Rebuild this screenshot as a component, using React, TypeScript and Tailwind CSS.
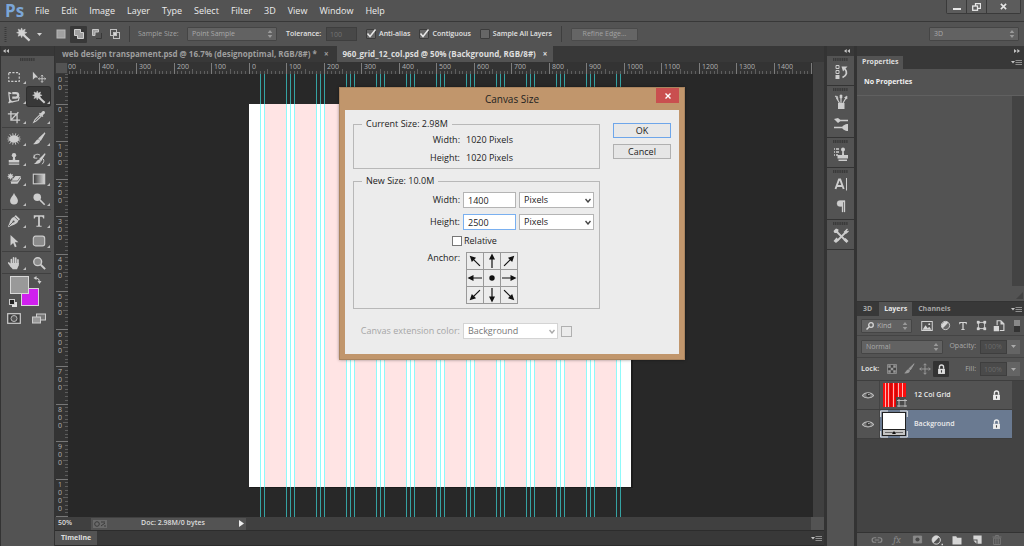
import React from "react";

type Kids = { children?: React.ReactNode };

const MENUS = ["File", "Edit", "Image", "Layer", "Type", "Select", "Filter", "3D", "View", "Window", "Help"];

/* ---------- icons ---------- */

function Ico({ children, className = "size-4" }: Kids & { className?: string }) {
  return (
    <svg viewBox="0 0 16 16" className={className} fill="none" stroke="currentColor" strokeWidth="1.3" aria-hidden="true">
      {children}
    </svg>
  );
}

const Marquee = () => <Ico><rect x="2" y="3" width="12" height="10" strokeDasharray="2.5 1.6" /></Ico>;
const Move = () => (
  <Ico>
    <path d="M1 2v9l2.600-2.400H7z" fill="currentColor" stroke="none" />
    <path d="M11.500 6v8M7.500 10h8M10.300 7.200l1.200-1.400 1.200 1.400M10.300 12.800l1.200 1.400 1.200-1.400M8.700 8.800 7.300 10l1.400 1.200M14.300 8.800l1.400 1.200-1.400 1.200" strokeWidth="1" />
  </Ico>
);
const MagLasso = () => (
  <Ico>
    <path d="M1.500 2.500l3.500 1.500M2 3l1 9 3 1.500 7-1.500 1-4M2 15l2-4" strokeWidth="1.300" />
    <path d="M6 3.500h4.200a2.600 2.600 0 0 1 0 5.200H6" strokeWidth="2.600" />
    <path d="M1.500 15l2.500-4 2.500 3z" fill="currentColor" stroke="none" />
  </Ico>
);
const Wand = () => (
  <Ico>
    <path d="M7.500 8 14.500 14.500" strokeWidth="2.400" />
    <path d="M6 1l1 2.600L9.800 2.300 8.900 5l2.600 1-2.600 1.100.9 2.700L7 8.700 6 11.300 5 8.700 2.300 9.800 3.300 7 .700 6l2.600-1L2.300 2.300 5 3.500z" fill="currentColor" stroke="currentColor" strokeWidth=".6" />
  </Ico>
);
const Crop = () => <Ico><path d="M4.500 1v10.500H15M1 4.500h10.500V15M5 11l8-8.500" strokeWidth="1.500" /></Ico>;
const Dropper = () => (
  <Ico>
    <path d="M9 5.500 3.500 11 2 14l3-1.500L10.500 7z" strokeWidth="1.200" />
    <path d="M8 4l1-1 1 .8L12 1.500c2-1.200 3.600.8 2.500 2.500L12.200 6l.8 1-1 1z" fill="currentColor" stroke="none" />
  </Ico>
);
const Heal = () => (
  <Ico>
    <ellipse cx="8" cy="8" rx="5.600" ry="4.300" fill="currentColor" stroke="none" />
    <path d="M3 2.500l1.500 2M6.500 1.500l.5 2.500M10 1.500 9.500 4M13 3l-1.500 2M3 13.500l1.500-2M6.500 14.500 7 12M10 14.500 9.500 12M13 13l-1.500-2M.5 8H3M13 8h2.500M1 5.500l2 .8M1 10.500l2-.8M15 5.500l-2 .8M15 10.500l-2-.8" strokeWidth="1" />
  </Ico>
);
const Brush = () => (
  <Ico>
    <path d="M14.800 1 8 7.500 9.800 9.300z" fill="currentColor" />
    <path d="M7.500 8.200 9.300 10c0 3-4 4.500-8.300 3.700C4 12.800 4 8.500 7.500 8.200z" fill="currentColor" stroke="none" />
  </Ico>
);
const Stamp = () => (
  <Ico>
    <circle cx="8" cy="3.600" r="2.500" fill="currentColor" stroke="none" />
    <path d="M7 5h2l.5 4H14v3H2V9h4.500zM2 13.200h12v1.300H2z" fill="currentColor" stroke="none" />
  </Ico>
);
const HistoryBrush = () => (
  <Ico>
    <path d="M15 2 9 8l1.400 1.400z" fill="currentColor" />
    <path d="M8.600 8.500l1.600 1.600c-.2 3-4 4.200-8.200 3.600 3-1 3-4.800 6.600-5.200z" fill="currentColor" stroke="none" />
    <path d="M2 7C2 3 6 1.500 9 3.500M2.500 3v4H6M13 8c1 2 .5 4-1.500 6" strokeWidth="1.100" />
  </Ico>
);
const Eraser = () => (
  <Ico>
    <path d="M4 1l.8 1.900 2-.7-.7 2L8 5l-1.900.8.7 2-2-.7L4 9l-.8-1.900-2 .7.7-2L0 5l1.900-.8-.7-2 2 .7z" fill="currentColor" stroke="none" />
    <path d="M9.500 4.500H16v3L12 13.500H4.500v-3z" fill="currentColor" stroke="none" />
    <path d="M4.500 10.300H12l4-5.500" stroke="#535353" strokeWidth=".8" />
  </Ico>
);
const Gradient = () => (
  <Ico>
    <defs>
      <linearGradient id="toolGradient"><stop offset="0" stopColor="#3a3a3a" /><stop offset="1" stopColor="#d8d8d8" /></linearGradient>
    </defs>
    <rect x="1.500" y="2.500" width="13" height="11" fill="url(#toolGradient)" />
  </Ico>
);
const Drop = () => <Ico><path d="M8 1c1 3 4.500 5.500 4.500 8.800a4.500 4.500 0 0 1-9 0C3.500 6.500 7 4 8 1z" fill="currentColor" stroke="none" /></Ico>;
const Dodge = () => <Ico><circle cx="6" cy="6" r="4.300" fill="currentColor" stroke="none" /><path d="M9 9l5.500 5.500" strokeWidth="1.800" /></Ico>;
const Pen = () => (
  <Ico>
    <path d="M10 1l5 5-2 1.500c-.5 3-3 4.500-8 6L1.500 15l-.5-.5L2.500 11C4 6 5.500 3.500 8.500 3z" fill="currentColor" stroke="none" />
    <path d="M2 14l5-5M9 3.500 12.500 7" stroke="#535353" strokeWidth="1" /><circle cx="7.500" cy="8.500" r="1.200" fill="#535353" stroke="none" />
  </Ico>
);
const TypeT = ({ className = "size-4" }: { className?: string }) => (
  <Ico className={className}><path d="M2 1.500h12V5h-1.200c-.3-1.500-.8-2-2.300-2H9v9.500c0 1 .5 1 2 1v1H5v-1c1.500 0 2 0 2-1V3H5.500C4 3 3.500 3.500 3.200 5H2z" fill="currentColor" stroke="none" /></Ico>
);
const PathArrow = () => <Ico><path d="M4 1v12l3-2.800L9 15l2-.8L9 9.500h4z" fill="currentColor" stroke="none" /></Ico>;
const RoundRect = () => <Ico><rect x="1.500" y="2.500" width="13" height="11" rx="2.500" fill="#8b8b8b" /></Ico>;
const Hand = () => (
  <Ico>
    <path d="M5 9V4M7.500 8V2M10 8V2.500M12.500 9V4.500M2 8l3 4" strokeWidth="1.900" strokeLinecap="round" />
    <path d="M4 8h9.400v2.500L11.500 15H6.500L3.500 11z" fill="currentColor" stroke="none" />
  </Ico>
);
const ZoomTool = () => <Ico><circle cx="6.500" cy="6.500" r="4.500" fill="#8b8b8b" strokeWidth="1.600" /><path d="M10 10l5 5" strokeWidth="2.200" /></Ico>;
const Lock = () => (
  <Ico className="size-[11px]">
    <path d="M5 7V4.500a3 3 0 0 1 6 0V7" strokeWidth="2" />
    <path d="M3 7h10v7.500H3z" fill="currentColor" stroke="none" /><path d="M8 9v3.500" stroke="#444" strokeWidth="1.600" />
  </Ico>
);
const Eye = () => (
  <Ico className="size-3 text-[#c0c0c0]">
    <path d="M.5 9C3.500 3.500 12.500 3.500 15.500 9 12.500 13 3.500 13 .5 9z" fill="#777" strokeWidth="1.400" />
    <circle cx="8.500" cy="8" r="2.800" fill="#3a3a3a" stroke="none" /><circle cx="9.200" cy="7.300" r="1.100" fill="currentColor" stroke="none" />
  </Ico>
);
const UpDown = () => (
  <svg viewBox="0 0 6 8" className="pointer-events-none absolute right-1 top-1/2 h-2 w-1.5 -translate-y-1/2" fill="#9a9a9a" aria-hidden="true">
    <path d="M3 0l2.300 3H.700zM3 8L.700 5h4.600z" />
  </svg>
);
const PanelMenu = () => (
  <button aria-label="Panel menu" className="flex items-center">
    <svg viewBox="0 0 11 7" className="h-[7px] w-[11px]" aria-hidden="true">
      <path d="M0 2h4L2 4.500z" fill="#c4c4c4" /><path d="M4.500 1.500H11M4.500 3.500H11M4.500 5.500H11" stroke="#999" strokeWidth=".9" />
    </svg>
  </button>
);
const Chevrons = ({ flip = false }: { flip?: boolean }) => (
  <svg viewBox="0 0 6 4" className={flip ? "h-1 w-1.5 rotate-180" : "h-1 w-1.5"} fill="#c4c4c4" aria-hidden="true">
    <path d="M2.700 0v4L0 2zM6 0v4L3.300 2z" />
  </svg>
);
const Grip = () => (
  <svg viewBox="0 0 15 3" className="h-[3px] w-[15px]" aria-hidden="true">
    <path d="M0 1.500h15" stroke="#3a3a3a" strokeWidth="3" strokeDasharray="1.200 .6" />
  </svg>
);

/* ---------- shared controls ---------- */

function DarkSelect({ label, value, className }: { label: string; value: string; className: string }) {
  return (
    <span className={`relative block h-[14px] ${className}`}>
      <select
        aria-label={label}
        defaultValue={value}
        className="block size-full appearance-none rounded-[1px] border border-[#454545] bg-[#626262] px-1 text-[7px] leading-3 text-[#a9a9a9]"
      >
        <option>{value}</option>
      </select>
      <UpDown />
    </span>
  );
}

function DarkCheck({ label, checked = false }: { label: string; checked?: boolean }) {
  return (
    <label className="flex items-center gap-[3px] font-semibold text-[#e2e2e2]">
      <span className="relative block size-[10px]">
        <input type="checkbox" defaultChecked={checked} className="peer block size-full appearance-none rounded-[1px] border border-[#3c3c3c] bg-[#666]" />
        <svg viewBox="0 0 10 10" className="pointer-events-none absolute inset-0 hidden size-full overflow-visible peer-checked:block" fill="none" aria-hidden="true">
          <path d="M1.500 4.500 4 7.500 9.500.5" stroke="#e8e8e8" strokeWidth="1.500" />
        </svg>
      </span>
      {label}
    </label>
  );
}

const Divider = () => <span className="h-4 w-px bg-[#3e3e3e]" />;

/* ---------- top bars ---------- */

function MenuBar() {
  return (
    <header className="flex h-[22px] shrink-0 items-center border-b border-[#383838] bg-[#535353] pl-[5px]">
      <span className="w-[30px] text-[17px] leading-5 font-bold text-[#7ba6d8]">Ps</span>
      <nav className="flex flex-1 gap-3 text-[9px] text-[#ececec]">
        {MENUS.map((m) => <button key={m}>{m}</button>)}
      </nav>
      <div className="mr-[3px] flex h-[14px] self-start rounded-b-xs border border-t-0 border-[#3a3a3a] text-[#e6e6e6]">
        <button aria-label="Minimize" className="flex w-[20px] items-center justify-center border-r border-[#3a3a3a] bg-[#5c5c5c]">
          <svg viewBox="0 0 8 8" className="size-2"><path d="M0 6h8" stroke="currentColor" strokeWidth="2" /></svg>
        </button>
        <button aria-label="Restore" className="flex w-[20px] items-center justify-center border-r border-[#3a3a3a] bg-[#5c5c5c]">
          <svg viewBox="0 0 9 8" className="h-2 w-[9px]" fill="none" stroke="currentColor" strokeWidth="1.300"><path d="M3.500 3V.7h5v4.600H6" /><rect x=".7" y="3" width="4.800" height="4.300" /></svg>
        </button>
        <button aria-label="Close" className="flex w-[33px] items-center justify-center bg-[#5c5c5c]">
          <svg viewBox="0 0 8 8" className="size-[7px]"><path d="M1 1l6 6M7 1L1 7" stroke="currentColor" strokeWidth="1.800" /></svg>
        </button>
      </div>
    </header>
  );
}

function OptionsBar() {
  return (
    <div className="flex h-6 shrink-0 items-center bg-[#535353] pl-1 text-[7px] text-[#a2a2a2]">
      <svg viewBox="0 0 3 15" className="h-[15px] w-[3px]" aria-hidden="true"><path d="M1.500 0v15" stroke="#3a3a3a" strokeWidth="2" strokeDasharray="1 1" /></svg>
      <button aria-label="Magic wand tool" className="ml-[9px] flex items-center gap-[6px] text-[#d2d2d2]">
        <span className="block size-[15px] *:size-full"><Wand /></span>
        <svg viewBox="0 0 5 3" className="h-[3px] w-[5px]" fill="currentColor"><path d="M0 0h5L2.500 3z" /></svg>
      </button>
      <div className="ml-[10px] flex items-center gap-px text-[#c0c0c0]">
        <button aria-label="New selection" className="flex size-[17px] items-center justify-center">
          <svg viewBox="0 0 10 10" className="size-[10px]"><rect x="1" y="1" width="8" height="8" fill="#a0a0a0" stroke="#b8b8b8" /></svg>
        </button>
        <button aria-label="Add to selection" className="flex size-[17px] items-center justify-center rounded-[1px] bg-[#383838]">
          <svg viewBox="0 0 10 10" className="size-[10px]"><path d="M.5.5h6v3h3v6h-6v-3h-3z" fill="#a0a0a0" stroke="#d0d0d0" /></svg>
        </button>
        <button aria-label="Subtract from selection" className="flex size-[17px] items-center justify-center">
          <svg viewBox="0 0 10 10" className="size-[10px]"><path d="M.5.5h6v2.500H3v3.500H.5z" fill="#a0a0a0" stroke="#c8c8c8" /><path d="M4 9.500h5.500V4" stroke="#383838" fill="none" /></svg>
        </button>
        <button aria-label="Intersect with selection" className="flex size-[17px] items-center justify-center">
          <svg viewBox="0 0 10 10" className="size-[10px]" fill="none" stroke="#c0c0c0"><rect x=".5" y=".5" width="6" height="6" /><rect x="3.500" y="3.500" width="6" height="6" /><rect x="3.500" y="3.500" width="3" height="3" fill="#d8d8d8" /></svg>
        </button>
      </div>
      <span className="mr-2 ml-1.5 flex"><Divider /></span>
      <span className="mr-1.5 w-[43px]">Sample Size:</span>
      <DarkSelect label="Sample size" value="Point Sample" className="w-[90px]" />
      <label className="ml-[9px] flex items-center font-semibold text-[#e2e2e2]">
        <span className="w-10">Tolerance:</span>
        <input defaultValue="100" className="h-[14px] w-[31px] border border-[#3e3e3e] bg-[#484848] px-[3px] text-[7px] font-normal text-[#747474]" />
      </label>
      <div className="ml-[9px] flex gap-[9px]">
        <DarkCheck label="Anti-alias" checked />
        <DarkCheck label="Contiguous" checked />
        <DarkCheck label="Sample All Layers" />
      </div>
      <span className="mx-[9px] flex"><Divider /></span>
      <button className="h-[13px] w-[67px] rounded-[1px] border border-[#4a4a4a] bg-[#656565] text-[#a2a2a2]">Refine Edge...</button>
      <span className="mr-[5px] ml-auto"><DarkSelect label="Workspace" value="3D" className="w-[90px]" /></span>
    </div>
  );
}

/* ---------- tools ---------- */

type Tool = { name: string; icon: React.ReactNode; active?: boolean; plain?: boolean };

const TOOL_GROUPS: Tool[][] = [
  [
    { name: "Marquee", icon: <Marquee /> }, { name: "Move", icon: <Move />, plain: true },
    { name: "Magnetic lasso", icon: <MagLasso /> }, { name: "Magic wand", icon: <Wand />, active: true },
    { name: "Crop", icon: <Crop /> }, { name: "Eyedropper", icon: <Dropper /> },
  ],
  [
    { name: "Healing", icon: <Heal /> }, { name: "Brush", icon: <Brush /> },
    { name: "Clone stamp", icon: <Stamp /> }, { name: "History brush", icon: <HistoryBrush /> },
    { name: "Background eraser", icon: <Eraser /> }, { name: "Gradient", icon: <Gradient /> },
    { name: "Blur", icon: <Drop /> }, { name: "Dodge", icon: <Dodge /> },
  ],
  [
    { name: "Pen", icon: <Pen /> }, { name: "Type", icon: <TypeT /> },
    { name: "Path selection", icon: <PathArrow /> }, { name: "Rounded rectangle", icon: <RoundRect /> },
  ],
  [{ name: "Hand", icon: <Hand /> }, { name: "Zoom", icon: <ZoomTool />, plain: true }],
];

function ToolButton({ tool }: { tool: Tool }) {
  return (
    <button
      aria-label={tool.name}
      className={tool.active
        ? "relative flex h-[19px] w-[23px] items-center justify-center rounded-[2px] bg-[#383838] shadow-[0_0_0_1px_#2e2e2e]"
        : "relative flex h-[19px] w-[23px] items-center justify-center"}
    >
      <span className="block size-[14px] *:size-full">{tool.icon}</span>
      {!tool.plain && (
        <svg viewBox="0 0 3 3" className="absolute right-0 bottom-0.5 size-[3px]" fill="#bdbdbd" aria-hidden="true"><path d="M3 0v3H0z" /></svg>
      )}
    </button>
  );
}

function Toolbar() {
  return (
    <aside className="flex w-[55px] shrink-0 flex-col border-x border-[#333] bg-[#535353] text-[#cdcdcd]">
      <div className="flex h-[10px] items-center bg-[#383838] pl-0.5"><Chevrons /></div>
      <div className="flex h-[10px] justify-center pt-0.5"><Grip /></div>
      {TOOL_GROUPS.map((group, i) => (
        <div key={i} className="mr-[3px] ml-px grid grid-cols-2 justify-items-center gap-y-px border-b border-[#404040] py-px">
          {group.map((t) => <ToolButton key={t.name} tool={t} />)}
        </div>
      ))}
      <svg viewBox="0 0 50 34" className="h-[34px] w-[50px]" aria-hidden="true">
        <rect x="20.500" y="14.500" width="17" height="17" fill="#d020ee" stroke="#d8d8d8" />
        <rect x="9.500" y="2.500" width="18" height="17" fill="#999" stroke="#d8d8d8" />
        <path d="M35.500 2v4L32.500 4zM36.500 7h4l-2 3z" fill="#cdcdcd" />
        <path d="M35 4q3.500 0 3.500 4" fill="none" stroke="#cdcdcd" />
        <rect x="11" y="28" width="5" height="5" fill="#e0e0e0" /><rect x="8.500" y="25.500" width="5" height="5" fill="#222" stroke="#cdcdcd" />
      </svg>
      <div className="mr-[3px] ml-px grid grid-cols-2 justify-items-center">
        <button aria-label="Quick mask" className="flex h-5 items-center">
          <svg viewBox="0 0 14 11" className="h-[11px] w-[14px]"><rect x=".7" y=".7" width="12.600" height="9.600" fill="#3d3d3d" stroke="#cdcdcd" strokeWidth="1.200" /><circle cx="7" cy="5.500" r="3" fill="#555" stroke="#bbb" /></svg>
        </button>
        <button aria-label="Screen mode" className="flex h-5 items-center">
          <svg viewBox="0 0 14 11" className="h-[11px] w-[14px]"><rect x="4.500" y="1" width="9" height="6" fill="#777" stroke="#cdcdcd" /><rect x=".5" y="4" width="8" height="6" fill="#999" stroke="#cdcdcd" /></svg>
        </button>
      </div>
    </aside>
  );
}

/* ---------- document ---------- */

const UNIT = 0.375;
const ORIGIN_X = 181;
const ORIGIN_Y = 30;

const range = (from: number, to: number, step: number) =>
  Array.from({ length: Math.floor((to - from) / step) + 1 }, (_, i) => from + i * step);

function TopRuler() {
  return (
    <svg className="h-3 w-full text-[7px]" aria-hidden="true">
      {range(-480, 1500, 10).map((v) => {
        const x = Math.floor(ORIGIN_X + v * UNIT) + 0.5;
        const top = v % 100 === 0 ? 1 : v % 50 === 0 ? 7 : 9;
        return <path key={v} d={`M${x} ${top}V12`} stroke={v % 100 === 0 ? "#7c7c7c" : "#5e5e5e"} />;
      })}
      <text x="0" y="7" fill="#b0b0b0">00</text>
      {range(-400, 1400, 100).map((v) => (
        <text key={v} x={Math.floor(ORIGIN_X + v * UNIT) + 3} y="7" fill="#b0b0b0">{Math.abs(v)}</text>
      ))}
    </svg>
  );
}

function SideRuler() {
  return (
    <svg className="h-full w-[13px] text-[7px]" aria-hidden="true">
      {range(-80, 1100, 10).map((v) => {
        const y = Math.floor(ORIGIN_Y + v * UNIT) + 0.5;
        const left = v % 100 === 0 ? 1 : v % 50 === 0 ? 8 : 10;
        return <path key={v} d={`M${left} ${y}H13`} stroke={v % 100 === 0 ? "#777" : "#5c5c5c"} />;
      })}
      <text x="3" y="8" fill="#b0b0b0">0</text>
      <text x="3" y="16" fill="#b0b0b0">0</text>
      {range(0, 1000, 100).map((v) =>
        String(v).split("").map((digit, i) => (
          <text key={`${v}-${i}`} x="3" y={Math.floor(ORIGIN_Y + v * UNIT) + 8 + i * 8} fill="#b0b0b0">{digit}</text>
        ))
      )}
    </svg>
  );
}

function Artboard() {
  const columns = range(0, 11, 1);
  const guides = columns.flatMap((c) => {
    const left = 40 + c * 80;
    return c === 0 ? [left - 10, left, left + 60, left + 70] : [left, left + 60, left + 70];
  });
  return (
    <svg className="block size-full" role="img" aria-label="960 grid canvas">
      <rect x="182" y="31" width="383" height="383" fill="#1c1c1c" />
      <rect x="181" y="30" width="382" height="383" fill="#fff" />
      {columns.map((c) => (
        <rect key={c} x={ORIGIN_X + 15 + c * 30} y="30" width="23" height="383" fill="#ffe4e4" />
      ))}
      {guides.map((g) => {
        const x = Math.floor(ORIGIN_X + g * UNIT) + 0.5;
        return (
          <g key={g} strokeWidth="1">
            <path d={`M${x} 0V30M${x} 413V1000`} stroke="#35a3a3" />
            <path d={`M${x} 30V413`} stroke="#8ffafa" />
          </g>
        );
      })}
    </svg>
  );
}

function Workspace() {
  return (
    <main className="flex min-w-0 flex-1 flex-col bg-[#383838]">
      <div className="flex h-4 shrink-0 text-[8px] font-bold">
        <button className="flex items-center gap-[7px] pr-2 pl-[7px] text-[#9e9e9e]">web design transpament.psd @ 16.7% (designoptimal, RGB/8#) *<span>×</span></button>
        <button className="flex items-center gap-[7px] bg-[#535353] px-[6px] text-[#dedede]">960_grid_12_col.psd @ 50% (Background, RGB/8#)<span>×</span></button>
      </div>
      <div className="grid min-h-0 flex-1 grid-cols-[13px_1fr_11px] grid-rows-[12px_1fr_13px]">
        <div className="m-px bg-[#535353]" />
        <div className="overflow-hidden bg-[#333]"><TopRuler /></div>
        <div className="row-span-2 bg-[#404040]" />
        <div className="overflow-hidden bg-[#333]"><SideRuler /></div>
        <div className="overflow-hidden bg-[#282828]"><Artboard /></div>
        <div className="col-span-3 flex items-center bg-[#404040] text-[7px] font-semibold text-[#dcdcdc]">
          <span className="w-9 pl-[3px]">50%</span>
          <div className="flex h-3 w-[155px] items-center bg-[#535353] px-0.5">
            <svg viewBox="0 0 14 8" className="h-2 w-[14px]" aria-hidden="true"><rect width="14" height="8" fill="#6a6a6a" /><circle cx="4" cy="4" r="2.300" fill="none" stroke="#3a3a3a" /><path d="M8 2h4M8 6l4-3M11 6h2" stroke="#3a3a3a" /></svg>
            <span className="flex-1 text-center">Doc: 2.98M/0 bytes</span>
            <svg viewBox="0 0 5 7" className="h-[7px] w-[5px]" fill="#eee" aria-hidden="true"><path d="M0 0l5 3.500L0 7z" /></svg>
          </div>
          <span className="ml-auto size-[13px] bg-[#535353]" />
        </div>
      </div>
      <div className="flex h-4 shrink-0 items-center justify-between border-y border-[#2c2c2c] pr-0.5 text-[7px] font-bold text-[#dedede]">
        <button className="h-full bg-[#535353] px-1.5">Timeline</button>
        <PanelMenu />
      </div>
    </main>
  );
}

/* ---------- right side ---------- */

const DOCK: { name: string; icon: React.ReactNode }[][] = [
  [{ name: "History", icon: <Ico><path d="M3 1.500h3v3H3zM3 6.500h3v3H3z" strokeWidth="1" /><path d="M2.500 11h4v4h-4z" fill="currentColor" stroke="none" /><path d="M9.500 13.500c4.500-2 5-5.500 2.500-8.500" strokeWidth="1.800" /><path d="M8.500 2.500h6L10 7.500z" fill="currentColor" stroke="none" /></Ico> }],
  [
    { name: "Brush presets", icon: <Ico><path d="M5 9h6.500v6H5z" fill="currentColor" stroke="none" /><path d="M6.500 9 3.500 4M8 9V2.500M10 9l3-5" strokeWidth="1.200" /><path d="M2 2l2.500.5.5 3zM7 1h2v3H7zM11.500 3.500 14 2v3z" fill="currentColor" strokeWidth=".6" /></Ico> },
    { name: "Brush settings", icon: <Ico><path d="M6 4.500h9M1 11.500h8" strokeWidth="1.500" /><path d="M1 3l4-1 3 2.500L5 7zM15 8v7c-3 0-6-2-6-3.500S12 8 15 8z" fill="currentColor" stroke="none" /></Ico> },
  ],
  [{ name: "Clone source", icon: <Ico><path d="M1 3h5M1 6h5M1 9h4" strokeDasharray="1 1 3" /><circle cx="10" cy="3.500" r="2" fill="currentColor" stroke="none" /><path d="M9.300 5h1.400l.4 4H15v3.500H4.500V9h4.500zM5.500 13.500H14V15H5.500z" fill="currentColor" stroke="none" /></Ico> }],
  [
    { name: "Character", icon: <Ico><path d="M2.500 13 6 3.500h1.200L10.700 13M4 10h5.200" strokeWidth="1.900" /><path d="M13.500 2v12.500" strokeWidth="1" /></Ico> },
    { name: "Paragraph", icon: <Ico><path d="M12 2.500H7a3 3 0 0 0 0 6h2V14h1V4h1v10h1z" fill="currentColor" stroke="currentColor" strokeWidth=".3" /></Ico> },
  ],
  [{ name: "Tool presets", icon: <Ico><path d="M3 3l10 10" strokeWidth="1.800" /><path d="M14 3 4 13" strokeWidth="1.800" /><path d="M.5 3 3 .5l2.500 1L5 5 1.500 5zM10.500 12l2-2 3 3-2 2zM.5 13l3-3.500 2.500 2.500-3 3z" fill="currentColor" stroke="none" /><path d="M11 4.500l3.500-3.500M12.500 5.500 15.500 3" /></Ico> }],
];

function Dock() {
  return (
    <aside className="flex w-[33px] shrink-0 flex-col border-x-[3px] border-[#333] bg-[#535353] text-[#cdcdcd]">
      <div className="flex h-[10px] items-center justify-end bg-[#383838] pr-1"><Chevrons /></div>
      {DOCK.map((group, i) => (
        <div key={i} className="flex flex-col items-center border-b border-[#333] pt-0.5 pb-0.5">
          <Grip />
          {group.map((d) => (
            <button key={d.name} aria-label={d.name} className="my-[3px] block size-4 *:size-full">{d.icon}</button>
          ))}
        </div>
      ))}
    </aside>
  );
}

function PropertiesPanel() {
  return (
    <section className="flex h-[245px] shrink-0 flex-col bg-[#535353] text-[7px] font-bold">
      <div className="flex h-[13px] items-center justify-between bg-[#383838] pr-0.5">
        <h2 className="flex h-full items-center bg-[#535353] px-[5px] text-[#dedede]">Properties</h2>
        <PanelMenu />
      </div>
      <p className="flex h-[27px] items-center border-b border-[#606060] pl-[7px] text-[#f0f0f0]">No Properties</p>
      <div className="ml-auto w-3 flex-1 bg-[#434343]" />
      <svg viewBox="0 0 8 8" className="mt-1.5 mr-px mb-0.5 ml-auto size-[7px]" aria-hidden="true"><path d="M8 0v8H0z" fill="#424242" /></svg>
    </section>
  );
}

function PercentField({ label }: { label: string }) {
  return (
    <label className="flex items-center text-[7px] text-[#a9a9a9]">
      <span className="mr-1">{label}</span>
      <input defaultValue="100%" className="h-[14px] w-[27px] border border-[#3e3e3e] bg-[#4a4a4a] px-[3px] text-[7px] text-[#6a6a6a]" />
      <span className="flex h-[14px] w-[13px] items-center justify-center bg-[#646464]">
        <svg viewBox="0 0 5 3" className="h-[3px] w-[5px]" fill="#aaa" aria-hidden="true"><path d="M0 0h5L2.500 3z" /></svg>
      </span>
    </label>
  );
}

function LayerRow({ name, selected = false, children }: Kids & { name: string; selected?: boolean }) {
  return (
    <li className={selected
      ? "flex h-[29px] items-center border-b border-[#3e3e3e] bg-[#6a7a91]"
      : "flex h-[29px] items-center border-b border-[#3e3e3e] bg-[#535353]"}>
      <button aria-label={`Toggle ${name}`} className="flex h-full w-[23px] items-center justify-center border-r border-[#444] bg-[#535353]"><Eye /></button>
      {children}
      <span className="flex-1 pl-[6px]">{name}</span>
      <span className="mr-2.5"><Lock /></span>
    </li>
  );
}

const FILTERS: { name: string; icon: React.ReactNode }[] = [
  { name: "Pixel", icon: <Ico className="size-3"><rect x="1" y="2" width="14" height="12" /><path d="M2 13l4-6 3 4 2-2 3 4z" fill="currentColor" stroke="none" /><circle cx="11" cy="5.500" r="1.300" fill="currentColor" stroke="none" /></Ico> },
  { name: "Adjustment", icon: <Ico className="size-[11px]"><circle cx="8" cy="8" r="6" fill="#666" /><path d="M3.800 12.200a6 6 0 0 1 8.400-8.400z" fill="currentColor" stroke="none" /></Ico> },
  { name: "Type", icon: <TypeT className="size-[10px]" /> },
  { name: "Shape", icon: <Ico className="size-[11px]"><path d="M3.500 3.500h9v9h-9z" /><path d="M1.500 1.500h3.500v3.500H1.500zM11 1.500h3.500v3.500H11zM1.500 11h3.500v3.500H1.500zM11 11h3.500v3.500H11z" fill="currentColor" strokeWidth=".5" /></Ico> },
  { name: "Smart object", icon: <Ico className="size-3"><path d="M5.500 7V1h5l4 4v9H9" strokeWidth="1.500" /><path d="M1 8h7v7H1zM10 1v5h5z" fill="currentColor" stroke="none" /></Ico> },
];

const LAYER_ACTIONS: { name: string; icon: React.ReactNode }[] = [
  { name: "Link layers", icon: <Ico className="size-3 text-[#8a8a8a]"><path d="M7 11H4.500a3 3 0 0 1 0-6H7M9 5h2.500a3 3 0 0 1 0 6H9M5 8h6" strokeWidth="1.600" /></Ico> },
  { name: "Layer style", icon: <span className="font-serif text-[10px] leading-3 text-[#8a8a8a] italic">fx</span> },
  { name: "Layer mask", icon: <Ico className="size-[11px] text-[#8a8a8a]"><path d="M2 3h12v10H2z" fill="currentColor" /><circle cx="8" cy="8" r="3" fill="#4a4a4a" stroke="none" /></Ico> },
  { name: "Adjustment layer", icon: <Ico className="size-3"><circle cx="7" cy="8" r="5.500" /><path d="M3.100 11.900a5.500 5.500 0 0 1 7.800-7.800z" fill="currentColor" stroke="none" /><path d="M14 13h2v2h-2z" fill="currentColor" stroke="none" /></Ico> },
  { name: "Group", icon: <Ico className="size-3"><path d="M2 3h5l1 2h6v9H2z" fill="currentColor" stroke="none" /></Ico> },
  { name: "New layer", icon: <Ico className="size-[11px]"><path d="M2 2h12v12H8V8H2z" fill="currentColor" stroke="none" /><path d="M2 9.500h4.500V14z" fill="currentColor" stroke="none" /></Ico> },
  { name: "Delete layer", icon: <Ico className="size-3 text-[#777]"><path d="M2 4h12M6 3.500V2h4v1.500M3.500 5.500h9V14h-9zM6.500 6v7M9.500 6v7" /></Ico> },
];

function LayersPanel() {
  return (
    <section className="flex min-h-0 flex-1 flex-col border-t border-[#333] bg-[#535353] text-[7px] text-[#d6d6d6]">
      <div className="flex h-[14px] items-center bg-[#383838] pr-0.5 font-bold text-[#a6a6a6]">
        <button className="h-full pr-[7px] pl-[6px]">3D</button>
        <button className="h-full bg-[#535353] px-[5px] text-[#e6e6e6]">Layers</button>
        <button className="h-full px-[6px]">Channels</button>
        <span className="ml-auto flex"><PanelMenu /></span>
      </div>
      <div className="flex h-5 items-center border-b border-[#444] px-1">
        <span className="relative">
          <select aria-label="Filter kind" defaultValue="Kind" className="block h-[14px] w-[51px] appearance-none rounded-[1px] border border-[#454545] bg-[#626262] pl-[15px] text-[7px] leading-3 text-[#b4b4b4]"><option>Kind</option></select>
          <svg viewBox="0 0 8 8" className="pointer-events-none absolute top-[3px] left-[5px] size-2" fill="none" stroke="#d6d6d6" aria-hidden="true"><circle cx="5" cy="3" r="2.300" strokeWidth="1.300" /><path d="M3.300 4.700.5 7.500" strokeWidth="1.500" /></svg>
          <UpDown />
        </span>
        <div className="ml-[6px] flex">
          {FILTERS.map((f) => <button key={f.name} aria-label={f.name} className="flex w-[18px] items-center justify-center">{f.icon}</button>)}
        </div>
        <button aria-label="Toggle filter" className="ml-auto flex"><svg viewBox="0 0 6 12" className="h-3 w-1.5"><rect width="6" height="12" fill="#333" /><rect width="6" height="6" fill="#888" /></svg></button>
      </div>
      <div className="flex h-[22px] items-center justify-between border-b border-[#444] px-1">
        <DarkSelect label="Blend mode" value="Normal" className="w-[82px]" />
        <PercentField label="Opacity:" />
      </div>
      <div className="flex h-[22px] items-center px-1">
        <span className="w-[22px] font-bold">Lock:</span>
        <div className="flex items-center text-[#9a9a9a]">
          <button aria-label="Lock transparency" className="flex w-[17px] justify-center"><Ico className="size-[10px]"><rect x="1" y="1" width="14" height="14" fill="#444" /><path d="M2 2h4v4H2zM10 2h4v4h-4zM6 6h4v4H6zM2 10h4v4H2zM10 10h4v4h-4z" fill="currentColor" stroke="none" /></Ico></button>
          <button aria-label="Lock pixels" className="flex w-[17px] justify-center *:size-3"><Brush /></button>
          <button aria-label="Lock position" className="flex w-[16px] justify-center"><Ico className="size-3"><path d="M8 1v14M1 8h14M6 3l2-2 2 2M6 13l2 2 2-2M3 6 1 8l2 2M13 6l2 2-2 2" /></Ico></button>
          <button aria-label="Lock all" className="flex size-4 items-center justify-center rounded-[1px] bg-[#333] text-[#dedede]"><Lock /></button>
        </div>
        <span className="ml-auto"><PercentField label="Fill:" /></span>
      </div>
      <div className="flex min-h-0 flex-1 border-t border-[#3e3e3e] bg-[#434343]">
        <ul className="mr-3 flex-1 font-semibold text-[#ececec]">
          <LayerRow name="12 Col Grid">
            <svg viewBox="0 0 28 28" className="size-7" aria-hidden="true">
              <rect x="3" y="2" width="23" height="24" fill="#fb0d0d" />
              <path d="M5.500 2v24M8.500 2v24M13.500 2v24M18.500 2v24M22.500 2v24" stroke="#ffc4c4" strokeWidth=".9" />
              <path d="M11 2v24M16 2v24" stroke="#a00000" strokeWidth=".8" />
              <path d="M16 16h10v10H16z" fill="#4a4a4a" />
              <path d="M19 18v8M25 18v8M17 19.500h10M17 25h10" stroke="#c4c4c4" strokeWidth=".9" />
            </svg>
          </LayerRow>
          <LayerRow name="Background" selected>
            <svg viewBox="0 0 28 28" className="size-7" aria-hidden="true">
              <path d="M.7 7V1H8M20 1h7.300v6M27.300 21v6H20M8 27H.7v-6" stroke="#e8e8e8" fill="none" />
              <rect x="2.500" y="2.500" width="23" height="23" fill="#c4c4c4" stroke="#222" />
              <path d="M3 3h22v16H3z" fill="#fff" /><path d="M3 19.500h22" stroke="#222" /><path d="M5 22.500h18" stroke="#666" /><path d="M12 24h4l-2-3z" fill="#111" />
            </svg>
          </LayerRow>
        </ul>
      </div>
      <div className="flex h-[14px] shrink-0 items-center border-t border-[#333] pl-[10px]">
        {LAYER_ACTIONS.map((a) => <button key={a.name} aria-label={a.name} className="flex w-5 items-center justify-center">{a.icon}</button>)}
      </div>
    </section>
  );
}

/* ---------- dialog ---------- */

const ARROWS: { name: string; turn: string }[] = [
  { name: "Top left", turn: "-rotate-45" }, { name: "Top", turn: "rotate-0" }, { name: "Top right", turn: "rotate-45" },
  { name: "Left", turn: "-rotate-90" }, { name: "Center", turn: "" }, { name: "Right", turn: "rotate-90" },
  { name: "Bottom left", turn: "-rotate-135" }, { name: "Bottom", turn: "rotate-180" }, { name: "Bottom right", turn: "rotate-135" },
];

function LightSelect({ id, label, value, className, disabled = false }: { id: string; label: string; value: string; className: string; disabled?: boolean }) {
  return (
    <span className={`relative block h-4 ${className}`}>
      <select
        id={id}
        aria-label={label}
        defaultValue={value}
        disabled={disabled}
        className="block size-full appearance-none border border-[#b4b4b4] bg-white px-1 text-[9px] leading-3 text-[#222] disabled:border-[#d4d4d4] disabled:text-[#777] disabled:opacity-100"
      >
        <option>{value}</option>
      </select>
      <svg viewBox="0 0 6 5" className="pointer-events-none absolute top-1.5 right-[3px] h-[5px] w-1.5" fill="none" aria-hidden="true">
        <path d="M.5 1 3 4l2.500-3" stroke={disabled ? "#aaa" : "#444"} strokeWidth="1.400" />
      </svg>
    </span>
  );
}

function SizeField({ id, label, value, focused = false }: { id: string; label: string; value: string; focused?: boolean }) {
  return (
    <div className="flex h-4 items-center gap-[3px]">
      <label htmlFor={id} className="w-[106px] text-right">{label}</label>
      <input
        id={id}
        defaultValue={value}
        className={focused
          ? "h-4 w-[53px] border border-[#7ab0f0] bg-white px-1 text-[9px]"
          : "h-4 w-[53px] border border-[#b4b4b4] bg-white px-1 text-[9px]"}
      />
      <LightSelect id={`${id}-unit`} label={`${label} unit`} value="Pixels" className="w-[75px]" />
    </div>
  );
}

function CanvasSizeDialog() {
  return (
    <div role="dialog" aria-label="Canvas Size" className="absolute top-[87px] left-1/2 w-[346px] -translate-x-1/2 border border-[#a9845f] bg-[#c1966c] px-[5px] pb-[5px] text-[9px] leading-3 text-[#222] shadow-[0_0_3px_#0006]">
      <div className="relative flex h-[22px] items-center justify-center">
        <h1 className="text-[10px]">Canvas Size</h1>
        <button aria-label="Close dialog" className="absolute top-0 right-0 flex h-[15px] w-[23px] items-center justify-center bg-[#c94f4f]">
          <svg viewBox="0 0 6 6" className="size-1.5"><path d="M.5.5l5 5M5.500.5l-5 5" stroke="#fff" strokeWidth="1.400" /></svg>
        </button>
      </div>
      <div className="bg-[#ececec] pt-2 pr-2 pb-[15px] pl-2">
        <div className="flex items-start justify-between">
          <div className="flex w-[247px] flex-col gap-1.5">
            <fieldset className="border border-[#b8b8b8] pt-px pb-px">
              <legend className="ml-2 px-1">Current Size: 2.98M</legend>
              <dl className="grid grid-cols-[106px_1fr] gap-x-[6px] leading-[18px]">
                <dt className="text-right">Width:</dt><dd>1020 Pixels</dd>
                <dt className="text-right">Height:</dt><dd>1020 Pixels</dd>
              </dl>
            </fieldset>
            <fieldset className="border border-[#b8b8b8] pt-[5px] pb-1">
              <legend className="ml-2 px-1">New Size: 10.0M</legend>
              <div className="flex flex-col gap-1.5">
                <SizeField id="canvas-width" label="Width:" value="1400" />
                <SizeField id="canvas-height" label="Height:" value="2500" focused />
                <label className="ml-[98px] flex h-[10px] items-center gap-0.5">
                  <input type="checkbox" className="block size-[10px] appearance-none border border-[#777] bg-white" />
                  Relative
                </label>
                <div className="flex gap-[6px]">
                  <span className="w-[106px] text-right">Anchor:</span>
                  <div className="grid size-[52px] grid-cols-3 gap-px border border-[#999] bg-[#999]">
                    {ARROWS.map((a) => (
                      <button key={a.name} aria-label={a.name} className="flex items-center justify-center bg-[#ececec]">
                        <svg viewBox="0 0 16 16" className={`size-4 ${a.turn}`} aria-hidden="true">
                          {a.turn ? (
                            <><path d="M8 5v10" stroke="#111" strokeWidth="1.200" /><path d="M8 .5l3 6H5z" fill="#111" /></>
                          ) : (
                            <circle cx="8" cy="8" r="2.700" fill="#111" />
                          )}
                        </svg>
                      </button>
                    ))}
                  </div>
                </div>
              </div>
            </fieldset>
          </div>
          <div className="flex w-[58px] flex-col gap-1.5 pt-[5px]">
            <button className="h-[15px] border border-[#6ea6ea] bg-[#e8e8e8]">OK</button>
            <button className="h-[15px] border border-[#b0b0b0] bg-[#e6e6e6]">Cancel</button>
          </div>
        </div>
        <div className="mt-[14px] flex items-center gap-[3px]">
          <label htmlFor="extension-color" className="w-[107px] text-right text-[#a6a6a6]">Canvas extension color:</label>
          <LightSelect id="extension-color" label="Canvas extension color" value="Background" className="w-[95px]" disabled />
          <button aria-label="Pick extension color" disabled className="size-[11px] border border-[#b0b0b0]" />
        </div>
      </div>
    </div>
  );
}

export default function App() {
  return (
    <div className="relative flex h-screen flex-col overflow-hidden bg-[#383838] font-['Open_Sans','Noto_Sans',sans-serif] leading-normal">
      <MenuBar />
      <OptionsBar />
      <div className="flex min-h-0 flex-1">
        <Toolbar />
        <Workspace />
        <Dock />
        <div className="flex w-[167px] shrink-0 flex-col">
          <div className="flex h-[10px] items-center justify-end bg-[#383838] pr-1"><Chevrons flip /></div>
          <PropertiesPanel />
          <LayersPanel />
        </div>
      </div>
      <CanvasSizeDialog />
    </div>
  );
}
